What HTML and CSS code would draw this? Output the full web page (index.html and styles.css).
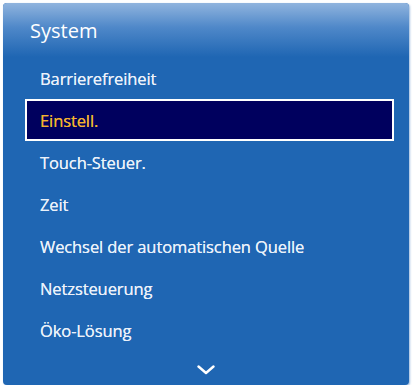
FILE: index.html
```html
<!DOCTYPE html>
<html lang="de">
<head>
  <meta charset="UTF-8">
  <title>System</title>
  <link rel="stylesheet" href="styles.css">
</head>
<body>
  <div class="panel">
    <div class="panel-head">System</div>
    <ul class="menu">
      <li class="item">Barrierefreiheit</li>
      <li class="item selected">Einstell.</li>
      <li class="item">Touch-Steuer.</li>
      <li class="item">Zeit</li>
      <li class="item">Wechsel der automatischen Quelle</li>
      <li class="item">Netzsteuerung</li>
      <li class="item">Öko-Lösung</li>
    </ul>
    <div class="more">
      <svg width="18" height="10" viewBox="0 0 18 10">
        <path d="M1.5 1.5 L9 8 L16.5 1.5" fill="none" stroke="#fff" stroke-width="2.4" stroke-linecap="round" stroke-linejoin="round"/>
      </svg>
    </div>
  </div>
</body>
</html>
```

FILE: styles.css
```css
html, body {
  margin: 0;
  padding: 0;
  background: #fff;
  font-family: 'Open Sans', 'Noto Sans', sans-serif;
}

.panel {
  margin: 3px 0 0 3px;
  width: 406px;
  height: 382px;
  background: #1f66b3;
  border-radius: 4px;
  box-shadow: 1px 1px 2px rgba(60, 120, 190, 0.5);
  display: flex;
  flex-direction: column;
  overflow: hidden;
}

.panel-head {
  height: 54px;
  padding-left: 27px;
  display: flex;
  align-items: center;
  font-size: 20px;
  color: #fff;
  background: linear-gradient(to bottom, #90b4de 0%, #4f88c9 45%, #1f66b3 100%);
}

.menu {
  list-style: none;
  margin: 0;
  padding: 0;
}

.item {
  height: 42px;
  display: flex;
  align-items: center;
  padding-left: 37px;
  font-size: 16.5px;
  color: #eaf1fa;
  letter-spacing: -0.1px;
  text-shadow: 0 0 0.4px #eaf1fa;
}

.item.selected {
  margin: 0 15px 0 22px;
  padding-left: 13px;
  height: 38px;
  border: 2px solid #fff;
  background: #00005e;
  color: #f3b330;
  text-shadow: 0 0 0.4px #f3b330;
}

.more {
  flex: 1;
  display: flex;
  justify-content: center;
  align-items: center;
  padding-top: 4px;
}
```
